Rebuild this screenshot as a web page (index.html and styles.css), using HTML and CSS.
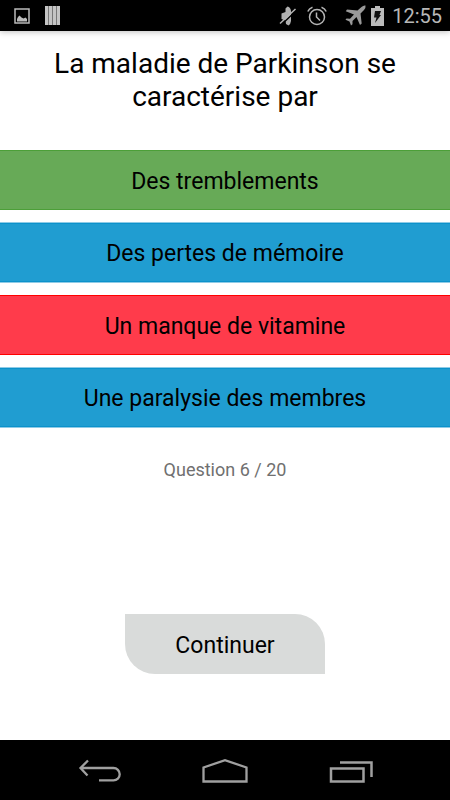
FILE: index.html
```html
<!DOCTYPE html>
<html lang="fr">
<head>
    <meta charset="UTF-8">
    <meta name="viewport" content="width=device-width, initial-scale=1.0">
    <title>Quiz</title>
    <link rel="stylesheet" href="styles.css">
</head>
<body>
    <header class="status-bar">
        <div class="status-group notifications">
            <svg width="16" height="18" viewBox="0 0 16 18">
                <rect x="1" y="2" width="14" height="14" fill="none" stroke="#bbb" stroke-width="1.5"/>
                <path d="M3 14.500V12l1-2 1.500-1.500 2 2 2 1 2-1 1.500 1.500v2.500z" fill="#bbb"/>
            </svg>
            <svg width="15" height="19" viewBox="0 0 15 19">
                <rect width="15" height="19" fill="#777"/>
                <path d="M0 0h3v19H0zM4 0h3v19H4zM8 0h3v19H8zM12 0h3v19h-3z" fill="#c4c4c4"/>
            </svg>
        </div>
        <div class="status-group system">
            <svg width="18" height="20" viewBox="0 0 18 20">
                <path d="M6.500 2.500L8.500 0.500Q11.500 1 12 5v10q-.5 3.500-2.500 4.500L7 18l-.5-3.500L2.500 13V7.500L6.500 6z" fill="#b0b0b0"/>
                <path d="M2 19L17.500 4.500" stroke="#000" stroke-width="1.500"/>
                <path d="M1 17.500L16.500 3" stroke="#b5b5b5" stroke-width="1.500"/>
            </svg>
            <svg width="20" height="20" viewBox="0 0 20 20" fill="none" stroke="#b5b5b5" stroke-width="1.500">
                <circle cx="10" cy="11" r="7.500"/>
                <path d="M9.500 6.500V11l3.500 3.500M.8 5.500Q2 2.500 5.500 1.200M14.500 1.200Q18 2.500 19.200 5.500"/>
            </svg>
            <svg class="plane" width="21" height="21" viewBox="0 0 21 21">
                <path d="M20.500.5Q18.500 0 16.500 2L12.500 5.500 2 4.500.8 6.200 9 9.500 5 13.800 1.500 13.500.5 14.800 4.500 16.500 6 20.500 7.500 19.200V16l4-4L15 20l1.700-1.500L15.500 8.500 19 5Q21 2.500 20.500.5z" fill="#999"/>
            </svg>
            <svg width="13" height="20" viewBox="0 0 13 20">
                <path d="M4 0h5v2h4v18H0V2h4z" fill="#bbb"/>
                <path d="M4 5h6L8.500 9H10L4 17l1.500-5.500H3z" fill="#111"/>
            </svg>
            <span class="clock">12:55</span>
        </div>
    </header>

    <main class="quiz">
        <h1 class="question">La maladie de Parkinson se caractérise par</h1>
        <div class="answers">
            <button type="button" class="answer correct">Des tremblements</button>
            <button type="button" class="answer">Des pertes de mémoire</button>
            <button type="button" class="answer wrong">Un manque de vitamine</button>
            <button type="button" class="answer">Une paralysie des membres</button>
        </div>
        <p class="progress">Question 6 / 20</p>
        <button type="button" class="continue">Continuer</button>
    </main>

    <nav class="nav-bar">
        <button type="button" class="nav-button" aria-label="Retour">
            <svg width="46" height="26" viewBox="0 0 46 26" fill="none" stroke="#a0a0a0" stroke-width="2.300">
                <path d="M4 11h32.500a6.200 6.200 0 0 1 0 12.400H22M11 3.500L3.500 11l7 7.500"/>
            </svg>
        </button>
        <button type="button" class="nav-button" aria-label="Accueil">
            <svg width="46" height="26" viewBox="0 0 46 26" fill="none" stroke="#a0a0a0" stroke-width="2.300">
                <path d="M1.500 24.500V10.500L23 3.200l21.500 7.300v14z"/>
            </svg>
        </button>
        <button type="button" class="nav-button" aria-label="Applications récentes">
            <svg width="46" height="26" viewBox="0 0 46 26" fill="none" stroke="#a0a0a0" stroke-width="2.500">
                <path d="M4 11.500h32.500v13H4zM13 5.500h31.500V20"/>
            </svg>
        </button>
    </nav>
</body>
</html>
```
FILE: styles.css
```css
:root {
    --correct: #67aa57;
    --correct-border: #4c9f38;
    --answer: #209dd1;
    --answer-border: #8fcbe6;
    --answer-edge: #0c92cb;
    --wrong: #ff3b4b;
    --wrong-border: #ff0000;
    --continue: #d9dbda;
    --text-secondary: #707070;
}

* {
    box-sizing: border-box;
}

body {
    margin: 0;
    min-height: 100vh;
    display: flex;
    flex-direction: column;
    background: #fff;
    color: #000;
    font-family: Roboto, sans-serif;
}

button {
    border: none;
    padding: 0;
    color: inherit;
    font-family: inherit;
    cursor: pointer;
}

svg {
    display: block;
}

.status-bar {
    display: flex;
    justify-content: space-between;
    align-items: center;
    height: 31px;
    padding: 0 8px 0 14px;
    background: #000;
    box-shadow: 0 1px 6px rgba(0, 0, 0, 0.25);
}

.status-group {
    display: flex;
    align-items: center;
}

.notifications {
    gap: 15px;
}

.system {
    gap: 8px;
}

.system svg:first-child {
    margin-right: 2px;
}

.plane {
    margin: 0 -3px 0 10px;
}

.clock {
    color: #b8b8b8;
    font-size: 20px;
    line-height: 24px;
}

.quiz {
    flex: 1;
    display: flex;
    flex-direction: column;
    align-items: center;
    padding-top: 16px;
}

.question {
    margin: 0;
    padding: 0 48px;
    font-size: 28px;
    font-weight: 400;
    line-height: 33px;
    text-align: center;
}

.answers {
    display: flex;
    flex-direction: column;
    gap: 12px;
    width: 100%;
    margin-top: 37px;
}

.answer {
    min-height: 61px;
    padding-top: 2px;
    background: var(--answer);
    border: solid var(--answer-border);
    border-width: 1px 0;
    box-shadow: inset 0 1px var(--answer-edge), inset 0 -1px var(--answer-edge);
    font-size: 23px;
}

.correct,
.wrong {
    min-height: 60px;
    box-shadow: none;
}

.correct {
    background: var(--correct);
    border-color: var(--correct-border);
}

.wrong {
    background: var(--wrong);
    border-color: var(--wrong-border);
}

.progress {
    margin: 32px 0 0;
    color: var(--text-secondary);
    font-size: 18px;
    line-height: 20px;
}

.continue {
    width: 200px;
    height: 60px;
    margin: auto 0 66px;
    padding-top: 2px;
    background: var(--continue);
    border-radius: 0 30px;
    font-size: 23px;
}

.nav-bar {
    display: flex;
    justify-content: center;
    gap: 79px;
    height: 60px;
    padding-top: 17px;
    background: #000;
}

.nav-button {
    align-self: flex-start;
    background: none;
}
```
